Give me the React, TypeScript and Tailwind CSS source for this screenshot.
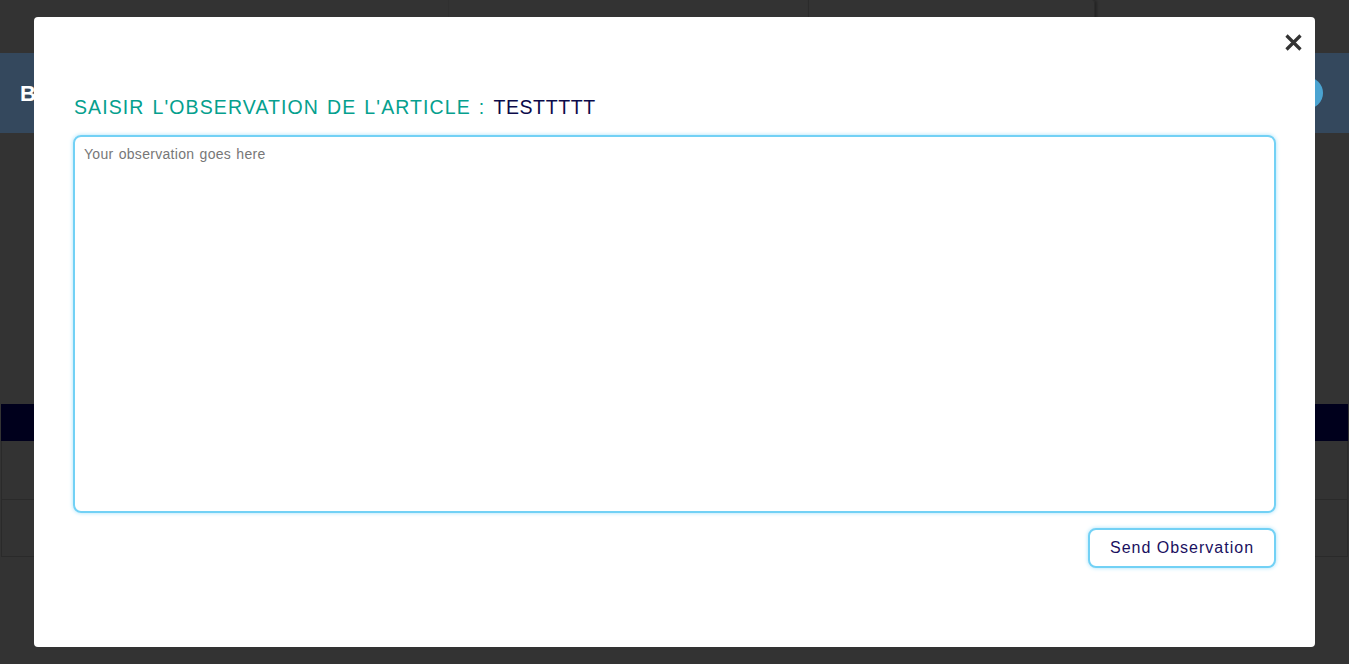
import React from "react";

export default function App() {
  return (
    <div
      className="relative w-full h-[664px] overflow-hidden bg-[#333333]"
      style={{ fontFamily: '"Liberation Sans", Arial, sans-serif' }}
    >
      {/* background page (dimmed) */}
      <div className="flex flex-col">
        <div className="h-[53px] flex">
          <div className="w-[448px]" />
          <div className="w-[360px] border-l border-[#303030]" />
          <div className="w-[287px] border-x border-[#2b2b2b] rounded-tr-[3px] shadow-[2px_0_3px_rgba(0,0,0,0.3)]" />
        </div>
        <div className="h-[80px] bg-[#34485d] flex items-center justify-between pl-[20px] pr-[26px]">
          <span className="text-white font-bold text-[22px]">B</span>
          <span className="w-[32px] h-[32px] rounded-full bg-[#4aa3d1]" />
        </div>
        <div className="h-[271px]" />
        <div className="h-[37px] mx-[1px] bg-[#00001c]" />
        <div className="h-[59px] mx-[1px] border-b border-[#2a2a2a] border-x" />
        <div className="h-[57px] mx-[1px] border-b border-[#2a2a2a] border-x" />
      </div>

      {/* modal */}
      <div className="absolute left-[34px] top-[17px] w-[1281px] h-[630px] bg-white rounded-[4px] flex flex-col px-[39px] pt-[80px]">
        <button className="absolute right-[12px] top-[15px] w-[20px] h-[20px] flex items-center justify-center">
          <svg width="17" height="17" viewBox="0 0 17 17">
            <path d="M1.5 1.5 L15.5 15.5 M15.5 1.5 L1.5 15.5" stroke="#333333" strokeWidth="3.2" strokeLinecap="butt" />
          </svg>
        </button>
        <h2 className="text-[19.5px] leading-[20px] tracking-[1.1px] [word-spacing:1.5px] pl-[1px] text-[#05a08e] font-normal">
          SAISIR L'OBSERVATION DE L'ARTICLE : <span className="text-[#0b0a4a] tracking-[0.6px]">TESTTTTT</span>
        </h2>
        <textarea
          placeholder="Your observation goes here"
          className="mt-[18px] w-[1203px] h-[378px] resize-none rounded-[8px] border-2 border-[#72d1f5] shadow-[0_0_4px_#a6e2fa] px-[9px] pt-[7px] pb-[9px] text-[14px] tracking-[0.3px] [word-spacing:1px] placeholder:text-[#777777] outline-none"
        />
        <div className="mt-[15px] flex justify-end w-[1203px]">
          <button className="w-[188px] h-[40px] rounded-[8px] border-2 border-[#72d1f5] shadow-[0_0_4px_#a6e2fa] text-[16px] tracking-[1px] text-[#1a1060] bg-white">
            Send Observation
          </button>
        </div>
      </div>
    </div>
  );
}
